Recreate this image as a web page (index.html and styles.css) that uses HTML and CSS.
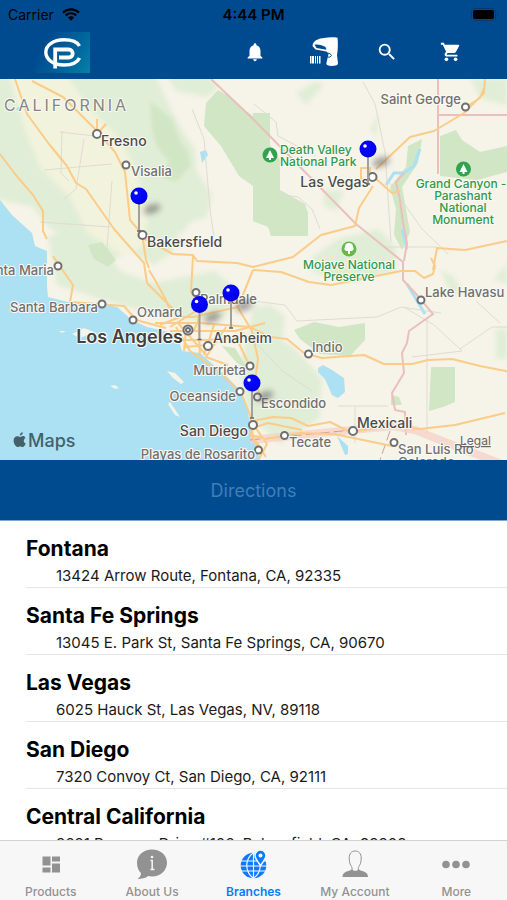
FILE: index.html
```html
<!DOCTYPE html>
<html lang="en">

<head>
    <meta charset="UTF-8">
    <meta name="viewport" content="width=device-width, initial-scale=1.0">
    <title>Branches</title>
    <link rel="stylesheet" href="styles.css">
</head>

<body>
    <header class="header">
        <div class="status">
            <div class="carrier">
                <span>Carrier</span>
                <svg width="18" height="13" viewBox="0 0 18 13" aria-hidden="true">
                    <path d="M1 4.600a11.500 11.500 0 0 1 16 0M3.700 7.400a7.600 7.600 0 0 1 10.600 0" fill="none" stroke="#000" stroke-width="2.200" />
                    <path d="M9 12.800 5.800 9.500a4.600 4.600 0 0 1 6.400 0z" />
                </svg>
            </div>
            <time class="clock">4:44 PM</time>
            <svg class="battery" width="28" height="13" viewBox="0 0 28 13" aria-label="Battery full">
                <rect x=".5" y=".5" width="24" height="12" rx="3.500" fill="none" stroke="#063a70" />
                <rect x="2" y="2" width="21" height="9" rx="2" />
                <path d="M26 4.500a2.300 2.300 0 0 1 0 4z" fill="#063a70" />
            </svg>
        </div>
        <nav class="topnav" aria-label="Tools">
            <a href="#home" class="logo" aria-label="Home">
                <svg width="55" height="41" viewBox="0 0 55 41">
                    <path d="M44.500 14C42 9.500 36 7.800 29 7.800 18.500 7.800 10.800 13 10.800 20.300S18.500 33 29 33c7 0 13-1.700 15.500-7" fill="none" stroke="#fff" stroke-width="3.400" />
                    <path d="M20.200 36.500V17.500h13.500a4 4 0 0 1 0 8H24" fill="none" stroke="#fff" stroke-width="3.800" />
                </svg>
            </a>
            <button class="tool" aria-label="Notifications">
                <svg width="22" height="22" viewBox="0 0 24 24" fill="#fff">
                    <path d="M12 22c1.100 0 2-.9 2-2h-4c0 1.100.9 2 2 2zm6-6v-5c0-3.070-1.630-5.640-4.500-6.320V4a1.500 1.500 0 0 0-3 0v.68C7.640 5.360 6 7.920 6 11v5l-2 2v1h16v-1z" />
                </svg>
            </button>
            <button class="tool scan" aria-label="Scan barcode">
                <svg width="36" height="30" viewBox="0 0 36 30">
                    <path fill="#fff" d="M10 6.500C12 3 16 1.500 21 1c4-.6 9-1 13.500-.2.700 6 .4 12-.5 17.500l1 7.700c0 1.600-1 2.200-2.400 2.500-3 .6-6 .6-8.500-.5-.9-.6-.8-2-.3-3.500L25.500 17l-2-2.500-11-2L9.500 9z" />
                    <path fill="#004b90" d="M11.500 7.800c4-.6 7.500.3 11 2.200l1 2.700-10-1.700z" />
                    <path d="M24 16q3.500 0 4.500 2.500-1 2.500-4 1.500" fill="none" stroke="#004b90" />
                    <path fill="#fff" d="M7 19h1.500v7.500H7zm2 0h2v7.500H9zm3 0h1v7.500h-1zm2 0h1v7.500h-1zm2 0h1.500v7.500H16z" />
                </svg>
            </button>
            <button class="tool" aria-label="Search">
                <svg width="22" height="22" viewBox="0 0 24 24" fill="#fff">
                    <path d="M15.500 14h-.79l-.28-.27A6.470 6.470 0 0 0 16 9.500 6.500 6.500 0 1 0 9.500 16c1.610 0 3.090-.59 4.230-1.570l.27.28v.79l5 4.990L20.490 19zm-6 0a4.500 4.500 0 1 1 0-9 4.500 4.500 0 0 1 0 9z" />
                </svg>
            </button>
            <button class="tool" aria-label="Cart">
                <svg width="22" height="22" viewBox="0 0 24 24" fill="#fff">
                    <path d="M1 2v2h2l3.600 7.590-1.350 2.450C4.520 15.370 5.480 17 7 17h12v-2H7.420c-.14 0-.25-.11-.25-.25l.03-.12.9-1.630h7.450c.75 0 1.410-.41 1.750-1.030l3.580-6.490A1 1 0 0 0 20 4H5.210l-.94-2z" />
                    <circle cx="7" cy="20" r="2" />
                    <circle cx="17" cy="20" r="2" />
                </svg>
            </button>
        </nav>
    </header>

    <section class="map" aria-label="Branch map">
        <svg class="map-art" viewBox="0 0 507 381">
            <defs>
                <filter id="blur" x="-50%" y="-100%" width="200%" height="300%">
                    <feGaussianBlur stdDeviation="3" />
                </filter>
                <filter id="soft">
                    <feGaussianBlur stdDeviation="2" />
                </filter>
                <radialGradient id="ball" cx=".4" cy=".35" r=".7">
                    <stop offset="0" stop-color="#0a0aff" />
                    <stop offset=".7" stop-color="#0000fa" />
                    <stop offset="1" stop-color="#0000c8" />
                </radialGradient>
                <g id="pin">
                    <ellipse cx="13" cy="13" rx="9" ry="4" fill="#555" opacity=".6" filter="url(#blur)" transform="rotate(-20 13 13)" />
                    <path d="M0 8v27" stroke="#a0a0a0" stroke-width="2" />
                    <path d="M-2 35h4" stroke="#666" stroke-width="1.500" />
                    <circle r="8.500" fill="url(#ball)" />
                    <circle cx="-3" cy="-3" r="1.800" fill="#fff" />
                </g>
            </defs>

            <rect width="507" height="381" fill="#f6f3e8" />

            <!-- valley, hills and forests -->
            <g filter="url(#soft)">
                <path class="hills" d="M-5-5h160l15 33 10 20 15 22 2 22 15 24-5 22-25 8-10 28-18 12-24-14-20 10-25-18-35-14-18-22L-5 120z" />
                <path class="valley" d="M8-5h58l22 33 30 30 18 32 12 44-4 34-22 8-34-22-18-36-30-30-14-34z" />
                <path class="hills" d="M48 158l22-10 34 18 16 26 34 12 60-12 25 20-14 26-30 4-60-12-28-8-50-16z" />
                <path class="hills" d="M150 110l30 0-2 30-12 26-14 6zM182 134l15-2-14 22-12 2zM165-5l45 0 8 15-12 8-30-6z" />
                <path class="hills" d="M253 228l18-2 14 12-3 24 10 5 30 32-2 40-40 26-32-30-10-48 10-28z" />
                <path class="hills" d="M296 14l20-12 8 4-18 20zM324 110l20 2-8 20-12-5zM312 178l26-18 40-10 18 18 0 24-42 10-40-8zM440 190l14 8 8 15-10 4zM470 0h37v26l-26-6zM496 250h11v30h-11zM494 200l13-15v20zM370 50l8-14-2 22z" />
                <path class="forest" d="M150 22l22 18 8 22 8 10 3 15-15 16-15-5 8-16-12-14-5-16z" />
            </g>
            <path class="forest" d="M206 24l12-13 14 8 13 12 8 6v70l-14-10-18-30-17-20zM253 34h17v32l10 15v30l25 14 3 9v23h-37l-3-9-15-6zM440 57l16-6 6 10 18 12 27-6v26l-30 8-37-4zM408 67l14-7-4 24-16 24 8 45-8 18-8-15 2-26-6-22 16-20zM294 251l20-8 25 5 26-4v17l-15 16-30-2-20-15zM431 288h24v35l-12 5-14 4zM391 316l8 2 3 8h-11zM222 267l13 2 12 20-10-5zM88 166l14-3 14 18-8 7-14-8z" />

            <!-- water -->
            <path class="water" d="M0 121l12 15 20 18 3 13 12 5v19l0 17 1 10 20 5 32 2 17 3 15 13 15 7 26 6 9 5-3 3 3 10 18 2 27 24 15 15 6 21 3 17 9 30H0z" />
            <path class="water" d="M318 289l5-3 9 5 12 8 1 14-7 6-6-3-7-16-7-7zM337 357l11 10 0 8-3 1zM200 73l6-2 2 5-6 8zM16 30l3-3 1 7z" />
            <path class="stream" d="M420 70l-6 17-10 7h-10l-8 12M402 150l5 20M407 205l18 30" />
            <path class="islands" d="M167 292l8 2 9 9-3 2-8-6zM110 307l5-1 4 3-4 1zM170 323l10 15-5-2-7-11zM59 252l7 0-4 2zM72 255l12-6 10 4-14 6zM337 216l8 4-2 5-7-4z" />

            <!-- minor roads -->
            <path class="minor" d="M62 52l-1 42 8 8M60 53l70 8M44 91l68-6M84 60l-8 50-12 10M112 102l-6 80M40 143l70 5M192 30l12 30 6 70 4 28M254 25l22 18 2 14 38 20M363 3l12 22 10 48 6 90M278 115l20 3 14 12 8 20M387 100l35 50 26 25M385 168h52M253 222l32 4 12 16 80-4 24-10 40 6M427 240v115M355 328v36M404 228l30 18 28 26-50 6M460 270l32-22 15 0M476 222l24 22M338 327h50M240 250l22 20 20 22 30 20" />

            <!-- borders -->
            <path class="border" d="M211 0l42 40 103 105 47 38v18l14 15 16 19-24 17-2 12-5 10 2 20-12 20 3 17 10 2 1 23" />
            <path class="border" d="M438 0v95M438 36h69M404 94l-8 9 4 18 3 23 4 20-3 18" />
            <path class="border-wide" d="M250 361l143-14 22 4 30 12 62 24" />
            <path class="border-dash" d="M250 361l143-14M390 352l-10 29" />

            <!-- highways -->
            <g class="roads">
                <path d="M15 0l12 35 22 30 18 22 9 17 10 6 28 40 30 34 3 20 30 30M32 2l31 16 32 32 20 23 10 20 5 48 12 14 4 26 3 8M0 75l15 20 18 21 10 16v20l4 8M53 177l8 12 12 17-3 17 54 4 12 14 30 8M97 50v-10M97 55l9-10" />
                <path d="M143 159l30 16 20 1 4 6 40 2 16 4 40-10 28-22 34-9 4-18 14-22M193 177l-2 36 12 18-9 20M149 191l6 10 10 18 6 14M253 191l28 2 28 10 22 3 70-14 14 0 9 7 9-4 2-8-4-8M374 98l18 16 8-2M376 90l34-32 24-6 30-18 20-20 1-14M466 28l14-9 4-10M361 89h9v11h-9zM433 191l4-22 28 2 42-9" />
                <path d="M160 246l20-8 13 0 45-10 15-37M155 244l45 0 50 4 14 7M170 252h65l30-8M178 261l30 0 55-4 24 3 17 14 18 5 42-3 20 9 28 0 16-4 24-1 28 7 36 7M234 222l18 30 6 28-3 22 7 20M176 248l14 24 33 24 19 20 8 20 3 22 8 18M186 250l-2 22M198 236l2 40M214 246l-10 30M226 248l-20 30 22 8M178 244l28 32M170 248l26-16M184 268l25-2M250 288l-14-30" />
                <path d="M253 342l20-4 18 1 17 8 22-4 20 10 40-6 30 3 35-4 50-12M258 340l-8 16 16 4 34-6 34 1 58 12M250 350l18-6 34 7M256 362l10 16M253 345l14 20-8 15" />
            </g>

            <!-- towns -->
            <g class="towns">
                <circle cx="97" cy="55" r="4" />
                <circle cx="126" cy="86" r="3.500" />
                <circle cx="142.500" cy="156" r="4" />
                <circle cx="58" cy="187" r="3.500" />
                <circle cx="465.500" cy="28" r="3.500" />
                <circle cx="372.500" cy="98" r="4" />
                <circle cx="421" cy="221" r="3.500" />
                <circle cx="196" cy="213.500" r="3.500" />
                <circle cx="102" cy="225" r="3.500" />
                <circle cx="133" cy="241" r="3.500" />
                <circle cx="188" cy="251" r="4.500" />
                <circle cx="188" cy="251" r="2" />
                <circle cx="208" cy="267" r="4" />
                <circle cx="250" cy="287" r="3.500" />
                <circle cx="240" cy="312.500" r="3.500" />
                <circle cx="257.500" cy="318" r="3.500" />
                <circle cx="308.500" cy="275" r="3.500" />
                <circle cx="253" cy="346" r="4" />
                <circle cx="258.500" cy="371" r="3.500" />
                <circle cx="284.500" cy="356.500" r="3.500" />
                <circle cx="353" cy="352" r="4" />
                <circle cx="394" cy="363.500" r="3.500" />
            </g>

            <!-- parks -->
            <g>
                <circle cx="270" cy="76" r="7.500" fill="#33a250" />
                <path d="M270 71l4 8h-3v2h-2v-2h-3z" fill="#fff" />
                <circle cx="463.500" cy="90" r="7.500" fill="#33a250" />
                <path d="M463.500 85l4 8h-3v2h-2v-2h-3z" fill="#fff" />
                <circle cx="349" cy="170" r="7.500" fill="#67b94b" />
                <path d="M348 175v-3h-2a2.500 2.500 0 0 1-1-4 4 4 0 0 1 8 0 2.500 2.500 0 0 1-1 4h-2v3z" fill="#fff" />
            </g>

            <text class="state" x="4" y="32">CALIFORNIA</text>
            <g class="city">
                <text x="101" y="67">Fresno</text>
                <text x="147" y="168">Bakersfield</text>
                <text x="369" y="108" text-anchor="end">Las Vegas</text>
                <text x="213" y="264">Anaheim</text>
                <text x="248" y="357" text-anchor="end">San Diego</text>
                <text x="357" y="349">Mexicali</text>
            </g>
            <g class="town">
                <text x="131" y="97">Visalia</text>
                <text x="54" y="196" text-anchor="end">Santa Maria</text>
                <text x="461" y="25" text-anchor="end">Saint George</text>
                <text x="425" y="218">Lake Havasu City</text>
                <text x="200" y="225">Palmdale</text>
                <text x="98" y="233" text-anchor="end">Santa Barbara</text>
                <text x="137" y="238">Oxnard</text>
                <text x="246" y="296" text-anchor="end">Murrieta</text>
                <text x="236" y="322" text-anchor="end">Oceanside</text>
                <text x="261" y="329">Escondido</text>
                <text x="312" y="273">Indio</text>
                <text x="289" y="368">Tecate</text>
                <text x="398" y="375">San Luis Río</text>
                <text x="398" y="388">Colorado</text>
                <text x="255" y="380" text-anchor="end">Playas de Rosarito</text>
            </g>
            <text class="metro" x="183" y="264" text-anchor="end">Los Angeles</text>
            <g class="park">
                <text x="280" y="75">Death Valley</text>
                <text x="280" y="87">National Park</text>
                <g text-anchor="middle">
                    <text x="461" y="109">Grand Canyon -</text>
                    <text x="463" y="121">Parashant</text>
                    <text x="463" y="133">National</text>
                    <text x="463" y="145">Monument</text>
                    <text x="349" y="190">Mojave National</text>
                    <text x="349" y="202">Preserve</text>
                </g>
            </g>

            <use href="#pin" x="139" y="117" />
            <use href="#pin" x="368" y="70" />
            <use href="#pin" x="231" y="214" />
            <use href="#pin" x="199.500" y="225.500" />
            <use href="#pin" x="252" y="304" />

            <path class="apple" d="M22.800 353.300c.2 1.600-1.300 3.200-2.900 3.200-.2-1.600 1.300-3.100 2.900-3.200zM25.300 359.300c-2.200 1.300-1.900 4.300.4 5.200-.5 1.500-1.800 3.500-3 3.500-1.100 0-1.400-.6-2.600-.6s-1.600.6-2.600.6c-2 0-3.900-3.800-3.900-6.400 0-2.700 1.700-4.400 3.600-4.400 1.200 0 2.100.7 2.900.7s1.800-.8 3.200-.8c.9 0 1.700.5 2 2.200z" />
            <text class="brand" x="28" y="368">Maps</text>
            <a href="#legal"><text class="legal" x="460" y="366">Legal</text></a>
        </svg>
    </section>

    <button class="directions" disabled>Directions</button>

    <main class="branches">
        <ul>
            <li>
                <h2>Fontana</h2>
                <p>13424 Arrow Route, Fontana, CA, 92335</p>
            </li>
            <li>
                <h2>Santa Fe Springs</h2>
                <p>13045 E. Park St, Santa Fe Springs, CA, 90670</p>
            </li>
            <li>
                <h2>Las Vegas</h2>
                <p>6025 Hauck St, Las Vegas, NV, 89118</p>
            </li>
            <li>
                <h2>San Diego</h2>
                <p>7320 Convoy Ct, San Diego, CA, 92111</p>
            </li>
            <li>
                <h2>Central California</h2>
                <p>3621 Pegasus Drive #106, Bakersfield, CA, 93308</p>
            </li>
        </ul>
    </main>

    <nav class="tabs" aria-label="Main">
        <a href="#products">
            <svg width="34" height="32" viewBox="0 0 34 32">
                <path d="M8.500 7.500h8v9h-8zM18 7.500h8v5h-8zM8.500 18.500h8v5h-8zM18 14.500h8v9h-8z" />
            </svg>
            Products
        </a>
        <a href="#about">
            <svg width="34" height="32" viewBox="0 0 34 32">
                <path d="M17 .5c8.500 0 15 5.700 15 13.200S25.500 27.500 17 27.500c-1.500 0-2.700-.1-3.800-.4C10.500 29.300 6.500 30 2.500 30c2-1.300 3.500-3.300 3.500-5.700C3.300 21.500 2 18 2 13.700 2 6.200 8.500.5 17 .5z" />
                <path d="M15.500 11.500h1.700V20M15.500 20.500h4" fill="none" stroke="#f7f7f7" stroke-width="1.500" />
                <circle cx="17" cy="8" r="1.300" fill="#f7f7f7" />
            </svg>
            About Us
        </a>
        <a href="#branches" class="active" aria-current="page">
            <svg width="34" height="32" viewBox="0 0 34 32">
                <circle cx="16.500" cy="16.500" r="12.800" />
                <path d="M3 12h27M3 17h27M4 22h25M16.500 3v27M16.500 3.500c-9 7-9 19 0 26M16.500 3.500c9 7 9 19 0 26" fill="none" stroke="#f7f7f7" stroke-width="1.200" />
                <path d="M23.500 16.500c-3-4.200-5.500-7-5.500-10a5.500 5.500 0 0 1 11 0c0 3-2.500 5.800-5.500 10z" stroke="#f7f7f7" stroke-width="1.500" />
                <circle cx="23.500" cy="6.500" r="2" fill="#f7f7f7" />
            </svg>
            Branches
        </a>
        <a href="#account">
            <svg width="34" height="32" viewBox="0 0 34 32">
                <path d="M14 21c.3-2-.2-3-1.100-4.500-1.200-2-1.700-4.500-1.700-7.500 0-4.300 2.300-7 6-7s6 2.700 6 7c0 3-.5 5.500-1.700 7.500-.9 1.500-1.400 2.500-1.100 4.500" fill="none" stroke="#929292" />
                <path d="M4.500 28c0-3.500 2.500-5 5.500-6 1.800-.6 3-1 4-1.800 1.500 2 5 2 6.500 0 1 .8 2.200 1.200 4 1.800 3 1 5.500 2.500 5.500 6z" />
            </svg>
            My Account
        </a>
        <a href="#more">
            <svg width="34" height="32" viewBox="0 0 34 32">
                <circle cx="7" cy="15.500" r="3.800" />
                <circle cx="17" cy="15.500" r="3.800" />
                <circle cx="27" cy="15.500" r="3.800" />
            </svg>
            More
        </a>
    </nav>
</body>

</html>
```

FILE: styles.css
```css
* {
    box-sizing: border-box;
    padding: 0;
    margin: 0;
}

body {
    display: flex;
    flex-direction: column;
    height: 100vh;
    overflow: hidden;
    background-color: #fff;
    color: #000;
    font-family: Inter, "Liberation Sans", sans-serif;
    font-size: 15px;
}

button {
    border: none;
    background: none;
    font-family: inherit;
}

ul {
    list-style: none;
}

/* header */
.header {
    background-color: #004b90;
    flex: none;
}

.status {
    display: grid;
    grid-template-columns: 1fr auto 1fr;
    align-items: center;
    height: 28px;
    padding: 0 8px;
}

.carrier {
    display: flex;
    align-items: center;
    gap: 8px;
    font-size: 14px;
}

.clock {
    font-size: 15px;
    font-weight: 600;
}

.battery {
    justify-self: end;
}

.topnav {
    display: flex;
    align-items: center;
    height: 51px;
    padding: 0 24px 3px 35px;
}

.logo {
    display: flex;
    margin-right: auto;
    background: linear-gradient(120deg, #004b90 20%, #00659c 65%, #0880a8);
}

.tool {
    display: flex;
    justify-content: center;
    align-items: center;
    width: 64px;
    height: 44px;
}

.tool.scan {
    width: 68px;
}

/* map */
.map {
    flex: none;
    overflow: hidden;
}

.map-art {
    display: block;
    width: 100%;
}

.hills {
    fill: #e1eed7;
}

.valley {
    fill: #f2f3dc;
}

.forest {
    fill: #d0e6c4;
}

.water {
    fill: #ace0f3;
}

.stream {
    fill: none;
    stroke: #ace0f3;
    stroke-width: 3;
}

.islands {
    fill: #f6f3e8;
}

.minor {
    fill: none;
    stroke: #dfdcd3;
}

.border {
    fill: none;
    stroke: #eac0bc;
    stroke-width: 2;
}

.border-wide {
    fill: none;
    stroke: #f6cfc5;
    stroke-width: 8;
    opacity: .7;
}

.border-dash {
    fill: none;
    stroke: #d99;
    stroke-width: 1;
    stroke-dasharray: 10 4;
}

.roads {
    fill: none;
    stroke: #fbcc88;
    stroke-width: 2;
    stroke-linejoin: round;
}

.towns {
    fill: #fff;
    stroke: #707070;
    stroke-width: 2;
}

.map-art text {
    paint-order: stroke;
    stroke: #fbfaf3;
    stroke-width: 2px;
    stroke-linejoin: round;
}

.state {
    fill: #858581;
    font-size: 16px;
    letter-spacing: 3px;
}

.city {
    fill: #4b4b4b;
    font-size: 14px;
    font-weight: 500;
}

.town {
    fill: #707070;
    font-size: 13px;
    font-weight: 500;
}

.metro {
    fill: #404040;
    font-size: 18px;
    font-weight: 600;
}

.park {
    fill: #2f9a4c;
    font-size: 12px;
    font-weight: 500;
}

.apple {
    fill: #46606a;
}

.map-art .brand {
    fill: #46606a;
    stroke: none;
    font-size: 18px;
    font-weight: 500;
}

.map-art .legal {
    fill: #666;
    stroke: none;
    font-size: 12px;
    text-decoration: underline;
}

/* branch list */
.directions {
    flex: none;
    height: 61px;
    background-color: #004b90;
    border-bottom: 1px solid #7fa5c8;
    color: #3f7fb5;
    font-size: 18px;
}

.branches {
    flex: 1;
    min-height: 0;
    overflow: hidden;
}

.branches li {
    height: 67px;
    margin-left: 26px;
    padding-top: 13px;
    border-bottom: 1px solid #e6e6e6;
}

.branches h2 {
    font-size: 21px;
    font-weight: 700;
    line-height: 30px;
}

.branches p {
    padding-left: 30px;
    color: #1a1a1a;
    font-size: 15px;
    line-height: 24px;
}

/* bottom tabs */
.tabs {
    display: flex;
    flex: none;
    height: 60px;
    background-color: #f7f7f7;
    border-top: 1px solid #d2d2d2;
}

.tabs a {
    display: flex;
    flex: 1;
    flex-direction: column;
    align-items: center;
    padding-top: 8px;
    color: #929292;
    font-size: 12px;
    font-weight: 500;
    line-height: 22px;
    text-decoration: none;
}

.tabs svg {
    flex: none;
    fill: #929292;
}

.tabs .active {
    color: #0a7aff;
    font-weight: 600;
}

.tabs .active svg {
    fill: #0a7aff;
}
```
